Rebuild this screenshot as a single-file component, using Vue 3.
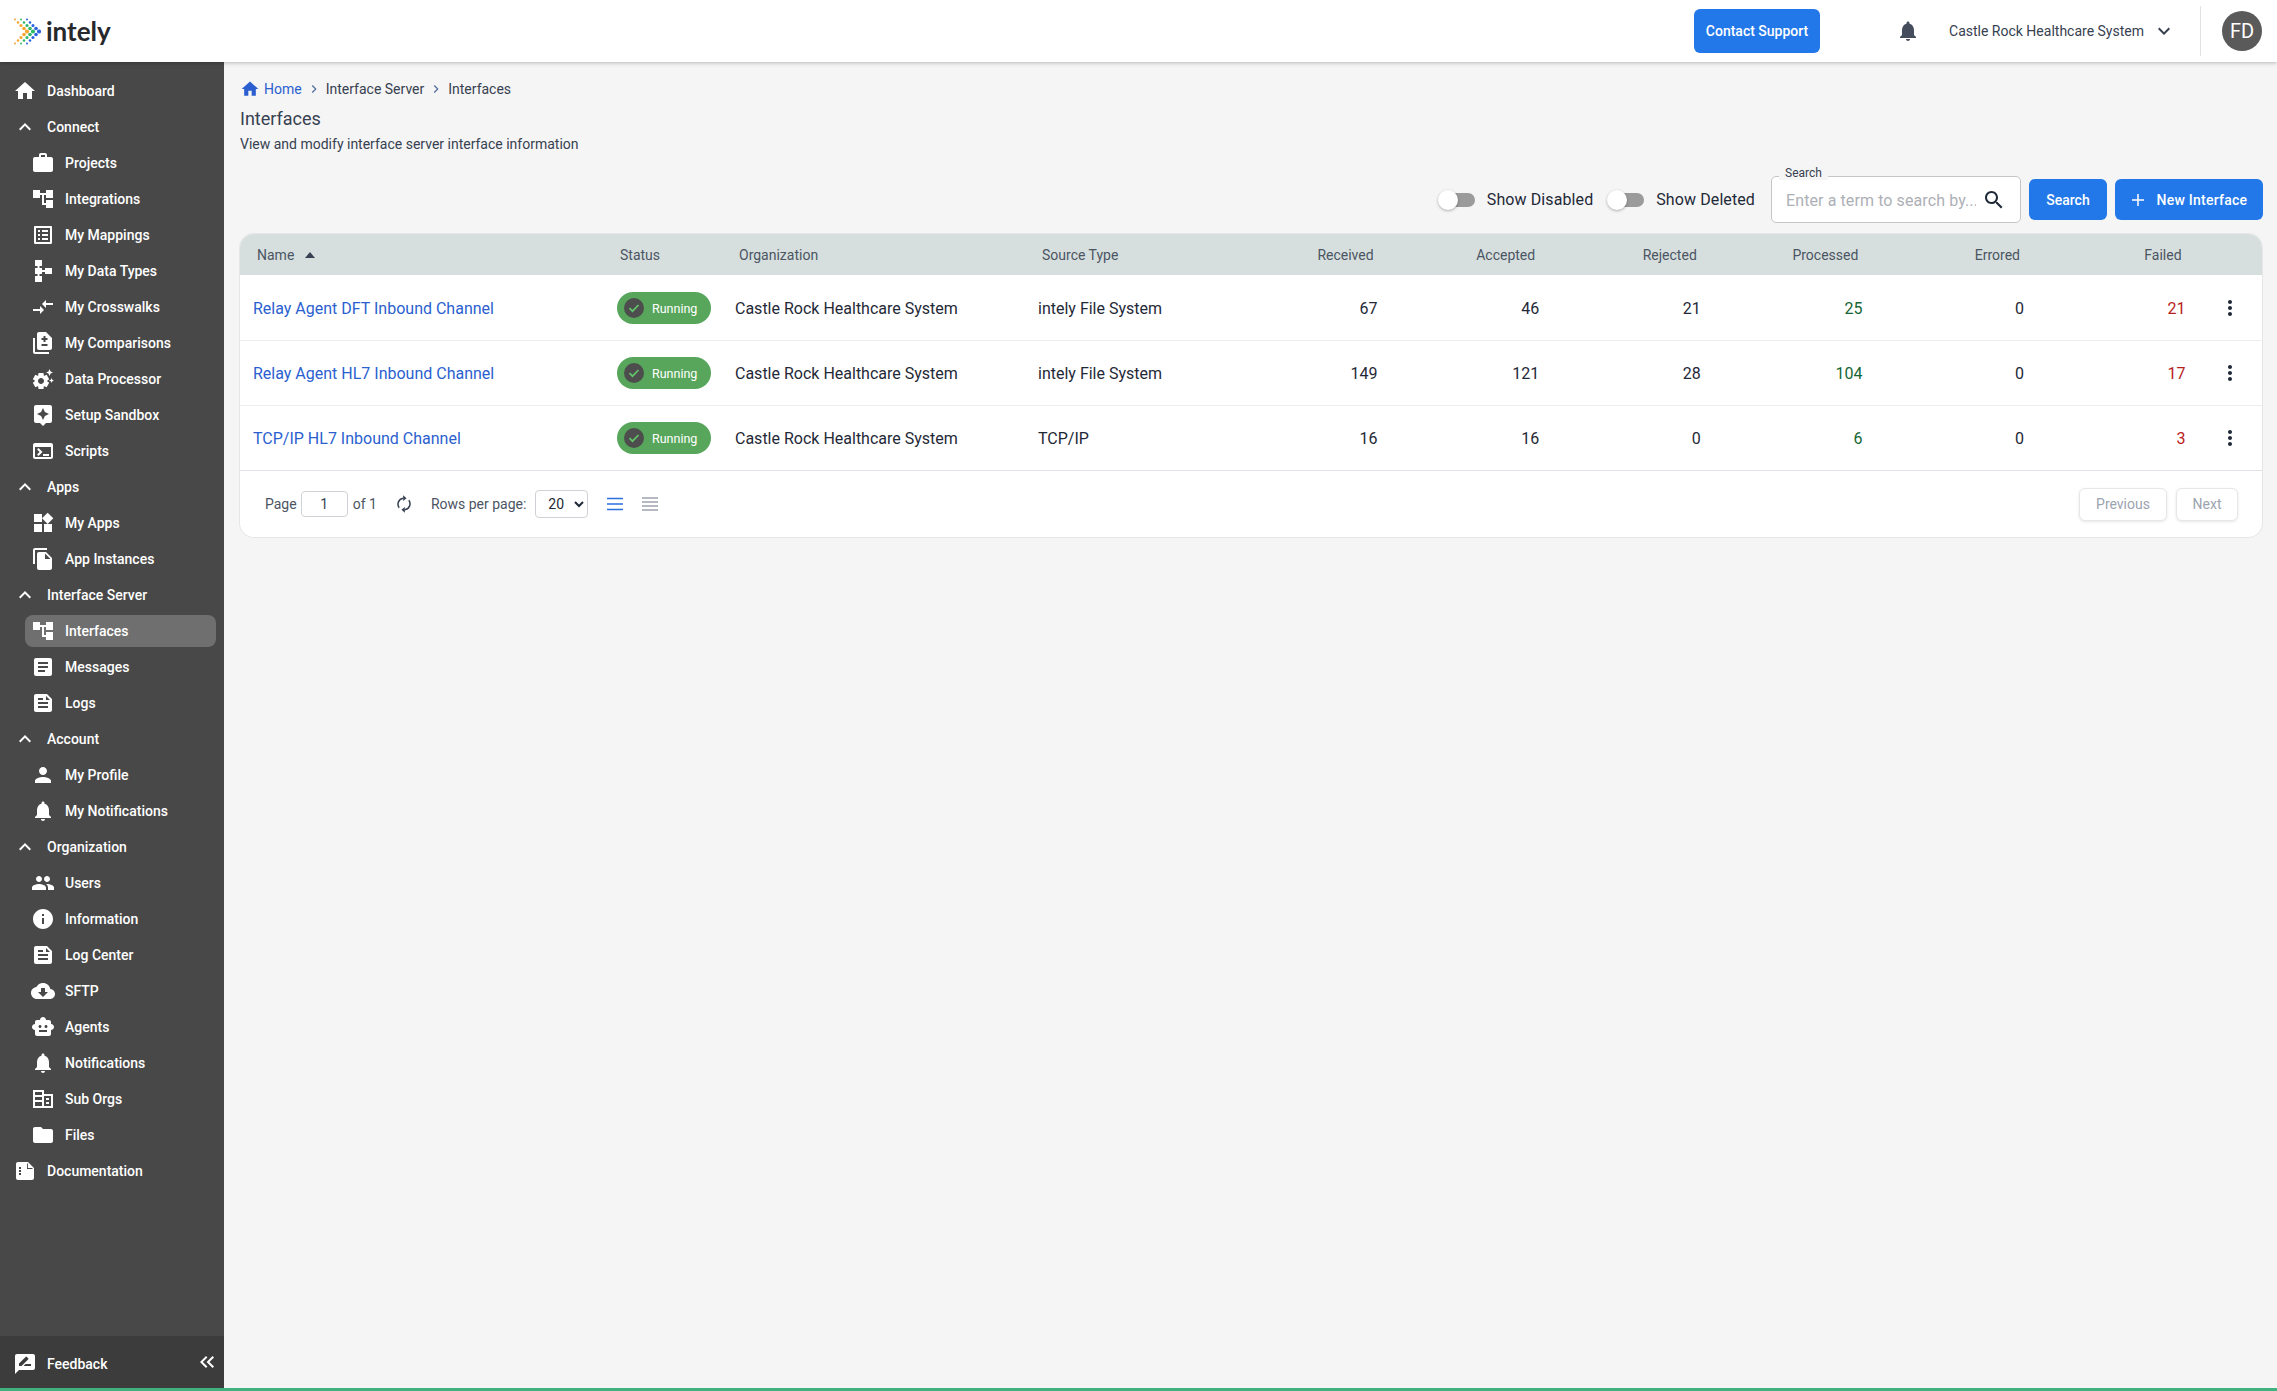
<template>
  <div class="page">
    <header class="topbar">
      <div class="logo">
        <svg class="logo-mark" viewBox="0 0 27 27">
          <circle v-for="(d, i) in logoDots" :key="i" :cx="d.x" :cy="d.y" :r="d.r" :fill="d.c" />
        </svg>
        <span class="logo-text">intely</span>
      </div>
      <button class="btn contact">Contact Support</button>
      <svg class="bell" viewBox="0 0 24 24"><path :d="icons.bell" /></svg>
      <span class="org-name">Castle Rock Healthcare System</span>
      <svg class="org-caret" viewBox="0 0 24 24"><path d="M7.41 8.59 12 13.17l4.59-4.58L18 10l-6 6-6-6z" /></svg>
      <div class="avatar-wrap"><div class="avatar">FD</div></div>
    </header>

    <div class="body">
      <aside class="sidebar">
        <nav class="nav">
          <a
            v-for="item in navItems"
            :key="item.label"
            class="nav-item"
            :class="{ child: item.child, active: item.active }"
          >
            <svg class="nav-icon" viewBox="0 0 24 24"><path fill-rule="evenodd" :d="icons[item.icon]" /></svg>
            <span>{{ item.label }}</span>
          </a>
        </nav>
        <div class="side-foot">
          <svg class="nav-icon" viewBox="0 0 24 24"><path :d="icons.feedback" /></svg>
          <span class="foot-label">Feedback</span>
          <svg class="collapse" viewBox="0 0 24 24"><path :d="icons.collapse" /></svg>
        </div>
      </aside>

      <main class="content">
        <div class="crumbs">
          <svg class="crumb-home" viewBox="0 0 24 24"><path :d="icons.home" /></svg>
          <a class="crumb-link">Home</a>
          <svg class="crumb-sep" viewBox="0 0 24 24"><path d="M9 6l6 6-6 6" /></svg>
          <span>Interface Server</span>
          <svg class="crumb-sep" viewBox="0 0 24 24"><path d="M9 6l6 6-6 6" /></svg>
          <span>Interfaces</span>
        </div>
        <h1 class="title">Interfaces</h1>
        <p class="subtitle">View and modify interface server interface information</p>

        <div class="toolbar">
          <label class="switch"><span class="track"><span class="knob"></span></span>Show Disabled</label>
          <label class="switch"><span class="track"><span class="knob"></span></span>Show Deleted</label>
          <div class="search-box">
            <span class="search-label">Search</span>
            <input class="search-input" placeholder="Enter a term to search by..." />
            <svg class="search-icon" viewBox="0 0 24 24"><path :d="icons.search" /></svg>
          </div>
          <button class="btn search-btn">Search</button>
          <button class="btn new-btn">
            <svg class="plus" viewBox="0 0 14 14"><path d="M7 1v12M1 7h12" /></svg>
            New Interface
          </button>
        </div>

        <section class="card">
          <div class="row head">
            <div class="th name-th">Name <svg class="sort" viewBox="0 0 10 6"><path d="M5 0l5 6H0z" /></svg></div>
            <div class="th status-th">Status</div>
            <div class="th left">Organization</div>
            <div class="th left">Source Type</div>
            <div v-for="c in numCols" :key="c" class="th num-th">{{ c }}</div>
            <div></div>
          </div>
          <div v-for="r in rows" :key="r.name" class="row item">
            <a class="name-link">{{ r.name }}</a>
            <div class="cell">
              <span class="pill">
                <svg class="pill-check" viewBox="0 0 20 20">
                  <circle cx="10" cy="10" r="10" fill="#4d4d4d" />
                  <path d="M5.5 10.2l3 3 6-6.2" fill="none" stroke="#62c46a" stroke-width="1.7" />
                </svg>
                Running
              </span>
            </div>
            <div class="cell">Castle Rock Healthcare System</div>
            <div class="cell">{{ r.source }}</div>
            <div class="num">{{ r.received }}</div>
            <div class="num">{{ r.accepted }}</div>
            <div class="num">{{ r.rejected }}</div>
            <div class="num green">{{ r.processed }}</div>
            <div class="num">{{ r.errored }}</div>
            <div class="num red">{{ r.failed }}</div>
            <div class="more">
              <svg viewBox="0 0 24 24"><path :d="icons.more" /></svg>
            </div>
          </div>
          <div class="pager">
            <span>Page</span>
            <input class="page-input" value="1" />
            <span class="of">of 1</span>
            <svg class="refresh" viewBox="0 0 24 24">
              <path class="refresh-arc" d="M6.2 16.5A7.2 7.2 0 0 1 11 5.1M17.8 7.5A7.2 7.2 0 0 1 13 18.9" />
              <path d="M11 1.5v7l4-3.5zM13 15.5v7l-4-3.5z" />
            </svg>
            <span class="rows-label">Rows per page:</span>
            <select class="rows-select">
              <option>20</option>
              <option>50</option>
            </select>
            <svg class="density blue" viewBox="0 0 16 14"><path d="M0 1.5h16M0 7h16M0 12.5h16" /></svg>
            <svg class="density gray" viewBox="0 0 16 14"><path d="M0 1h16M0 5h16M0 9h16M0 13h16" /></svg>
            <button class="page-btn prev">Previous</button>
            <button class="page-btn">Next</button>
          </div>
        </section>
      </main>
    </div>
    <div class="status-line"></div>
  </div>
</template>

<script setup>
const icons = {
  home: 'M10 20v-6h4v6h5v-8h3L12 3 2 12h3v8z',
  up: 'M12 8l-6 6 1.41 1.41L12 10.83l4.59 4.58L18 14z',
  work: 'M20 6h-4V4c0-1.11-.89-2-2-2h-4c-1.11 0-2 .89-2 2v2H4c-1.11 0-1.99.89-1.99 2L2 19c0 1.11.89 2 2 2h16c1.11 0 2-.89 2-2V8c0-1.11-.89-2-2-2zm-6 0h-4V4h4v2z',
  tree: 'M22 11V3h-7v3H9V3H2v8h7V8h2v10h4v3h7v-8h-7v3h-2V8h2v3z',
  listAlt: 'M19 5v14H5V5h14m1.1-2H3.9c-.5 0-.9.4-.9.9v16.2c0 .4.4.9.9.9h16.2c.4 0 .9-.5.9-.9V3.9c0-.5-.5-.9-.9-.9zM11 7h6v2h-6V7zm0 4h6v2h-6v-2zm0 4h6v2h-6zM7 7h2v2H7zm0 4h2v2H7zm0 4h2v2H7z',
  schema: 'M14 9v2h-3V9H8.5V7H11V1H4v6h2.5v2H4v6h2.5v2H4v6h7v-6H8.5v-2H11v-2h3v2h7V9H14z',
  compare: 'M9.01 14H2v2h7.01v3L13 15l-3.99-4v3zm5.98-1v-3H22V8h-7.01V5L11 9l3.99 4z',
  difference: 'M18 23H4c-1.1 0-2-.9-2-2V7h2v14h14v2zM15 1H8c-1.1 0-1.99.9-1.99 2L6 17c0 1.1.89 2 1.99 2H19c1.1 0 2-.9 2-2V7l-6-6zm1.5 14h-6v-2h6v2zm0-6h-2v2h-2V9h-2V7h2V5h2v2h2v2z',
  gearSpark: 'M17.41 6.59L15 5.5l2.41-1.09L18.5 2l1.09 2.41L22 5.5l-2.41 1.09L18.5 9l-1.09-2.41zM21.28 12.72L20.5 11l-.78 1.72L18 13.5l1.72.78L20.5 16l.78-1.72L23 13.5l-1.72-.78zM16.24 14.37l1.94 1.47-2.5 4.33-2.24-.94c-.2.13-.42.26-.64.37L12.5 22h-5l-.3-2.41c-.22-.11-.43-.23-.64-.37l-2.24.94-2.5-4.33 1.94-1.47c-.01-.12-.03-.25-.03-.37s.01-.25.02-.37l-1.94-1.47 2.5-4.33 2.24.94c.2-.13.42-.26.64-.37L7.5 6h5l.3 2.41c.22.11.43.23.64.37l2.24-.94 2.5 4.33-1.94 1.47c.01.12.02.24.02.37s-.01.25-.02.37zM13 14c0-1.66-1.34-3-3-3s-3 1.34-3 3 1.34 3 3 3 3-1.34 3-3z',
  assistant: 'M19 2H5c-1.1 0-2 .9-2 2v14c0 1.1.9 2 2 2h4l3 3 3-3h4c1.1 0 2-.9 2-2V4c0-1.1-.9-2-2-2zm-5.12 10.88L12 17l-1.88-4.12L6 11l4.12-1.88L12 5l1.88 4.12L18 11l-4.12 1.88z',
  terminal: 'M20 4H4c-1.1 0-2 .9-2 2v12c0 1.1.9 2 2 2h16c1.1 0 2-.9 2-2V6c0-1.1-.9-2-2-2zm0 14H4V8h16v10zm-2-1h-6v-2h6v2zM7.5 17l-1.41-1.41L8.67 13l-2.59-2.59L7.5 9l4 4-4 4z',
  widgets: 'M13 13v8h8v-8h-8zM3 21h8v-8H3v8zM3 3v8h8V3H3zm13.66-1.31L11 7.34 16.66 13l5.66-5.66-5.66-5.65z',
  fileCopy: 'M16 1H4c-1.1 0-2 .9-2 2v14h2V3h12V1zm-1 4l6 6v10c0 1.1-.9 2-2 2H7.99C6.89 23 6 22.1 6 21l.01-14c0-1.1.89-2 1.99-2h7zm-1 7h5.5L14 6.5V12z',
  article: 'M19 3H5c-1.1 0-2 .9-2 2v14c0 1.1.9 2 2 2h14c1.1 0 2-.9 2-2V5c0-1.1-.9-2-2-2zm-5 14H7v-2h7v2zm3-4H7v-2h10v2zm0-4H7V7h10v2z',
  feed: 'M16 3H5c-1.1 0-1.99.9-1.99 2L3 19c0 1.1.89 2 1.99 2H19c1.1 0 2-.9 2-2V8l-5-5zM7 7h5v2H7V7zm10 10H7v-2h10v2zm0-4H7v-2h10v2zm-2-4V5l4 4h-4z',
  person: 'M12 12c2.21 0 4-1.79 4-4s-1.79-4-4-4-4 1.79-4 4 1.79 4 4 4zm0 2c-2.67 0-8 1.34-8 4v2h16v-2c0-2.66-5.33-4-8-4z',
  bell: 'M12 22c1.1 0 2-.9 2-2h-4c0 1.1.89 2 2 2zm6-6v-5c0-3.07-1.64-5.64-4.5-6.32V4c0-.83-.67-1.5-1.5-1.5s-1.5.67-1.5 1.5v.68C7.63 5.36 6 7.92 6 11v5l-2 2v1h16v-1l-2-2z',
  people: 'M16 11c1.66 0 2.99-1.34 2.99-3S17.66 5 16 5c-1.66 0-3 1.34-3 3s1.34 3 3 3zm-8 0c1.66 0 2.99-1.34 2.99-3S9.66 5 8 5C6.34 5 5 6.34 5 8s1.34 3 3 3zm0 2c-2.33 0-7 1.17-7 3.5V19h14v-2.5c0-2.33-4.67-3.5-7-3.5zm8 0c-.29 0-.62.02-.97.05 1.16.84 1.97 1.97 1.97 3.45V19h6v-2.5c0-2.33-4.67-3.5-7-3.5z',
  info: 'M12 2C6.48 2 2 6.48 2 12s4.48 10 10 10 10-4.48 10-10S17.52 2 12 2zm1 15h-2v-6h2v6zm0-8h-2V7h2v2z',
  cloud: 'M19.35 10.04C18.67 6.59 15.64 4 12 4 9.11 4 6.6 5.64 5.35 8.04 2.34 8.36 0 10.91 0 14c0 3.31 2.69 6 6 6h13c2.76 0 5-2.24 5-5 0-2.64-2.05-4.78-4.65-4.96zM17 13l-5 5-5-5h3V9h4v4h3z',
  robot: 'M20 9V7c0-1.1-.9-2-2-2h-3c0-1.66-1.34-3-3-3S9 3.34 9 5H6c-1.1 0-2 .9-2 2v2c-1.66 0-3 1.34-3 3s1.34 3 3 3v4c0 1.1.9 2 2 2h12c1.1 0 2-.9 2-2v-4c1.66 0 3-1.34 3-3s-1.34-3-3-3zM7.5 11.5C7.5 10.67 8.17 10 9 10s1.5.67 1.5 1.5S9.83 13 9 13s-1.5-.67-1.5-1.5zM16 17H8v-2h8v2zm-1-4c-.83 0-1.5-.67-1.5-1.5S14.17 10 15 10s1.5.67 1.5 1.5S15.83 13 15 13z',
  building: 'M2 3h11v4h9v14H2zM4 5v3h7V5zM4 10v3h7v-3zM4 15v4h7v-4zM13 9v10h7V9zM15 11h3v2h-3zM15 15h3v2h-3z',
  folder: 'M10 4H4c-1.1 0-1.99.9-1.99 2L2 18c0 1.1.9 2 2 2h16c1.1 0 2-.9 2-2V8c0-1.1-.9-2-2-2h-8l-2-2z',
  doc: 'M5 3h10l6 6v10c0 1.1-.9 2-2 2H5c-1.1 0-2-.9-2-2V5c0-1.1.9-2 2-2zM14 4v6h6l-.9-.9h-4.2V4.9zM6 8h2v2H6zM6 11h2v2H6zM6 14h2v2H6z',
  feedback: 'M20 2H4c-1.1 0-1.99.9-1.99 2L2 22l4-4h14c1.1 0 2-.9 2-2V4c0-1.1-.9-2-2-2zM6 14v-2.47l6.88-6.88c.2-.2.51-.2.71 0l1.77 1.77c.2.2.2.51 0 .71L8.47 14H6zm12 0h-7.5l2-2H18v2z',
  collapse: 'M17.59 18L19 16.59 14.42 12 19 7.41 17.59 6l-6 6zM11 18l1.41-1.41L7.83 12l4.58-4.59L11 6l-6 6z',
  search: 'M15.5 14h-.79l-.28-.27C15.41 12.59 16 11.11 16 9.5 16 5.91 13.09 3 9.5 3S3 5.91 3 9.5 5.91 16 9.5 16c1.61 0 3.09-.59 4.23-1.57l.27.28v.79l5 4.99L20.49 19l-4.99-5zm-6 0C7.01 14 5 11.99 5 9.5S7.01 5 9.5 5 14 7.01 14 9.5 11.99 14 9.5 14z',
  more: 'M12 8c1.1 0 2-.9 2-2s-.9-2-2-2-2 .9-2 2 .9 2 2 2zm0 2c-1.1 0-2 .9-2 2s.9 2 2 2 2-.9 2-2-.9-2-2-2zm0 6c-1.1 0-2 .9-2 2s.9 2 2 2 2-.9 2-2-.9-2-2-2z'
}

const navItems = [
  { label: 'Dashboard', icon: 'home' },
  { label: 'Connect', icon: 'up' },
  { label: 'Projects', icon: 'work', child: true },
  { label: 'Integrations', icon: 'tree', child: true },
  { label: 'My Mappings', icon: 'listAlt', child: true },
  { label: 'My Data Types', icon: 'schema', child: true },
  { label: 'My Crosswalks', icon: 'compare', child: true },
  { label: 'My Comparisons', icon: 'difference', child: true },
  { label: 'Data Processor', icon: 'gearSpark', child: true },
  { label: 'Setup Sandbox', icon: 'assistant', child: true },
  { label: 'Scripts', icon: 'terminal', child: true },
  { label: 'Apps', icon: 'up' },
  { label: 'My Apps', icon: 'widgets', child: true },
  { label: 'App Instances', icon: 'fileCopy', child: true },
  { label: 'Interface Server', icon: 'up' },
  { label: 'Interfaces', icon: 'tree', child: true, active: true },
  { label: 'Messages', icon: 'article', child: true },
  { label: 'Logs', icon: 'feed', child: true },
  { label: 'Account', icon: 'up' },
  { label: 'My Profile', icon: 'person', child: true },
  { label: 'My Notifications', icon: 'bell', child: true },
  { label: 'Organization', icon: 'up' },
  { label: 'Users', icon: 'people', child: true },
  { label: 'Information', icon: 'info', child: true },
  { label: 'Log Center', icon: 'feed', child: true },
  { label: 'SFTP', icon: 'cloud', child: true },
  { label: 'Agents', icon: 'robot', child: true },
  { label: 'Notifications', icon: 'bell', child: true },
  { label: 'Sub Orgs', icon: 'building', child: true },
  { label: 'Files', icon: 'folder', child: true },
  { label: 'Documentation', icon: 'doc' }
]

const numCols = ['Received', 'Accepted', 'Rejected', 'Processed', 'Errored', 'Failed']

const rows = [
  { name: 'Relay Agent DFT Inbound Channel', source: 'intely File System', received: 67, accepted: 46, rejected: 21, processed: 25, errored: 0, failed: 21 },
  { name: 'Relay Agent HL7 Inbound Channel', source: 'intely File System', received: 149, accepted: 121, rejected: 28, processed: 104, errored: 0, failed: 17 },
  { name: 'TCP/IP HL7 Inbound Channel', source: 'TCP/IP', received: 16, accepted: 16, rejected: 0, processed: 6, errored: 0, failed: 3 }
]

// three chevrons of dots, biggest at the tip
const logoDots = []
const logoColors = ['#f7a531', '#2fb868', '#2a62e0']
logoColors.forEach((c, n) => {
  for (let i = -4; i <= 4; i++) {
    const step = 4 - Math.abs(i)
    logoDots.push({ x: 1 + n * 6 + step * 3, y: 13.5 + i * 3, r: 1 + step * 0.27, c })
  }
})
</script>

<style>
html, body {
  margin: 0;
  background: #f5f5f5;
}
</style>

<style scoped>
.page {
  height: 1391px;
  display: flex;
  flex-direction: column;
  overflow: hidden;
  font-family: Roboto, "Liberation Sans", sans-serif;
  color: #1f2937;
  background: #f5f5f5;
}
.topbar {
  height: 62px;
  flex: none;
  display: flex;
  align-items: center;
  background: #fff;
  box-shadow: 0 1px 4px rgba(0, 0, 0, 0.25);
  position: relative;
  z-index: 2;
}
.logo {
  display: flex;
  align-items: center;
  margin-left: 14px;
  margin-right: auto;
}
.logo-mark {
  width: 27px;
  height: 27px;
}
.logo-text {
  font-family: Lato, sans-serif;
  font-size: 26px;
  font-weight: 700;
  color: #26282c;
  margin-left: 5px;
  line-height: 1;
}
.btn {
  border: 0;
  border-radius: 6px;
  background: #2278e9;
  color: #fff;
  font-family: inherit;
  font-size: 14px;
  font-weight: 500;
}
.contact {
  width: 126px;
  height: 44px;
}
.bell {
  width: 24px;
  height: 24px;
  fill: #454c5c;
  margin-left: 76px;
}
.org-name {
  margin-left: 29px;
  font-size: 14px;
  color: #374151;
}
.org-caret {
  width: 24px;
  height: 24px;
  fill: #374151;
  margin-left: 8px;
}
.avatar-wrap {
  margin-left: 24px;
  height: 50px;
  width: 77px;
  border-left: 1px solid #e2e2e2;
  display: flex;
  align-items: center;
  padding-left: 21px;
  box-sizing: border-box;
}
.avatar {
  width: 40px;
  height: 40px;
  border-radius: 50%;
  background: #5a5a5a;
  color: #fff;
  font-size: 20px;
  display: flex;
  align-items: center;
  justify-content: center;
}
.body {
  flex: 1;
  display: flex;
  min-height: 0;
}
.sidebar {
  width: 224px;
  flex: none;
  background: #484848;
  display: flex;
  flex-direction: column;
  color: #fff;
}
.nav {
  flex: 1;
  padding-top: 11px;
}
.nav-item {
  height: 36px;
  display: flex;
  align-items: center;
  padding-left: 13px;
  font-size: 14px;
  font-weight: 500;
  box-sizing: border-box;
  position: relative;
}
.nav-item.child {
  padding-left: 31px;
}
.nav-item.active::before {
  content: "";
  position: absolute;
  left: 25px;
  right: 8px;
  top: 2px;
  bottom: 2px;
  border-radius: 8px;
  background: #6f6f6f;
}
.nav-item > * {
  position: relative;
}
.nav-icon {
  width: 24px;
  height: 24px;
  fill: #fff;
  flex: none;
  margin-right: 10px;
}
.side-foot {
  height: 52px;
  flex: none;
  background: #3c3c3c;
  display: flex;
  align-items: center;
  padding: 4px 5px 0 13px;
  box-sizing: border-box;
  font-size: 14px;
  font-weight: 500;
}
.foot-label {
  margin-right: auto;
}
.collapse {
  width: 24px;
  height: 24px;
  fill: #fff;
  margin-top: -4px;
}
.content {
  flex: 1;
  min-width: 0;
  padding: 17px 15px 0 16px;
}
.crumbs {
  display: flex;
  align-items: center;
  height: 20px;
  font-size: 14px;
  color: #374151;
}
.crumb-home {
  width: 20px;
  height: 20px;
  fill: #2b5fd0;
  margin-right: 4px;
}
.crumb-link {
  color: #2b5fd0;
}
.crumb-sep {
  width: 14px;
  height: 14px;
  margin: 0 5px;
  fill: none;
  stroke: #4b6a9b;
  stroke-width: 2;
}
.title {
  margin: 7px 0 0;
  font-size: 18px;
  line-height: 26px;
  font-weight: 400;
  color: #374151;
}
.subtitle {
  margin: 2px 0 0;
  font-size: 14px;
  line-height: 20px;
  color: #374151;
}
.toolbar {
  margin-top: 22px;
  display: flex;
  align-items: center;
  justify-content: flex-end;
  margin-right: -1px;
}
.switch {
  display: flex;
  align-items: center;
  font-size: 16px;
  letter-spacing: 0.1px;
  margin-right: 14px;
  color: #1f2937;
}
.switch + .switch {
  margin-right: 16px;
}
.track {
  width: 30px;
  height: 14px;
  border-radius: 7px;
  background: #9b9b9b;
  margin-left: 7px;
  margin-right: 12px;
  position: relative;
}
.knob {
  position: absolute;
  left: -7px;
  top: -3px;
  width: 20px;
  height: 20px;
  border-radius: 50%;
  background: #fff;
  box-shadow: 0 1px 3px rgba(0, 0, 0, 0.3);
}
.search-box {
  width: 250px;
  height: 47px;
  box-sizing: border-box;
  border: 1px solid #c6c6c6;
  border-radius: 5px;
  background: #fff;
  display: flex;
  align-items: center;
  padding: 0 14px;
  position: relative;
}
.search-label {
  position: absolute;
  left: 7px;
  top: -11px;
  background: #f5f5f5;
  padding: 0 6px;
  font-size: 12px;
  line-height: 14px;
  color: #374151;
}
.search-input {
  flex: 1;
  min-width: 0;
  border: 0;
  outline: 0;
  padding: 1px 0 0;
  font-family: inherit;
  font-size: 16px;
  letter-spacing: 0.1px;
}
.search-input::placeholder {
  color: #adb0b6;
}
.search-icon {
  width: 24px;
  height: 24px;
  fill: #1f2937;
  flex: none;
  margin-left: 6px;
}
.search-btn {
  width: 78px;
  height: 41px;
  margin-left: 8px;
}
.new-btn {
  width: 148px;
  height: 41px;
  margin-left: 8px;
  letter-spacing: 0.25px;
}
.plus {
  width: 14px;
  height: 14px;
  fill: none;
  stroke: #fff;
  stroke-width: 1.5;
  vertical-align: -2px;
  margin-right: 8px;
}
.card {
  margin-top: 11px;
  background: #fff;
  border-radius: 14px;
  overflow: hidden;
  box-shadow: 0 0 0 1px #e6e6e6;
}
.row {
  display: grid;
  grid-template-columns: 373px 118px 303px 186px repeat(6, 161.6px) 1fr;
  align-items: center;
}
.head {
  height: 41px;
  background: #d7dfde;
}
.th {
  font-size: 14px;
  color: #4b5563;
}
.name-th {
  padding-left: 17px;
  display: flex;
  align-items: center;
}
.sort {
  width: 10px;
  height: 6px;
  fill: #374151;
  margin-left: 11px;
}
.status-th {
  padding-left: 7px;
}
.left {
  padding-left: 8px;
}
.num-th {
  text-align: right;
  padding-right: 8px;
}
.item {
  height: 65px;
  border-top: 1px solid #eceef0;
  box-sizing: border-box;
  font-size: 16px;
}
.head + .item {
  border-top-color: transparent;
}
.name-link {
  padding-left: 13px;
  color: #2b5fd0;
}
.cell {
  padding-left: 4px;
  color: #1f2937;
}
.pill {
  width: 94px;
  height: 32px;
  border-radius: 16px;
  background: #58a65c;
  color: #fff;
  font-size: 12.5px;
  display: flex;
  align-items: center;
  box-sizing: border-box;
  padding: 1px 0 0 7px;
}
.pill-check {
  width: 20px;
  height: 20px;
  margin: -1px 8px 0 0;
}
.num {
  text-align: right;
  padding-right: 4px;
}
.green {
  color: #166534;
}
.red {
  color: #b91c1c;
}
.more {
  display: flex;
  padding-left: 28px;
}
.more svg {
  width: 24px;
  height: 24px;
  fill: #1f2937;
}
.pager {
  height: 67px;
  border-top: 1px solid #e2e3e8;
  box-sizing: border-box;
  display: flex;
  align-items: center;
  padding: 0 24px 0 25px;
  font-size: 14px;
  color: #4b5563;
}
.page-input {
  width: 47px;
  height: 26px;
  box-sizing: border-box;
  margin-left: 4px;
  border: 1px solid #cfd2d6;
  border-radius: 4px;
  text-align: center;
  font-family: inherit;
  font-size: 14px;
  color: #374151;
  padding: 0;
  outline: 0;
}
.of {
  margin-left: 5px;
}
.refresh {
  width: 20px;
  height: 20px;
  fill: #374151;
  margin-left: 17px;
}
.refresh-arc {
  fill: none;
  stroke: #374151;
  stroke-width: 1.8;
}
.rows-label {
  margin-left: 17px;
}
.rows-select {
  width: 53px;
  height: 28px;
  margin-left: 9px;
  border: 1px solid #cfd2d6;
  border-radius: 4px;
  background: #fff;
  font-family: inherit;
  font-size: 14px;
  color: #1f2937;
  padding-left: 8px;
}
.density {
  width: 16px;
  height: 14px;
  fill: none;
  stroke-width: 1.5;
}
.density.blue {
  stroke: #2b6fe0;
  margin-left: 19px;
}
.density.gray {
  stroke: #9ca3af;
  margin-left: 19px;
  margin-right: auto;
}
.page-btn {
  height: 33px;
  width: 62px;
  border: 1px solid #e7e7e7;
  border-radius: 6px;
  background: #fff;
  box-shadow: 0 1px 3px rgba(0, 0, 0, 0.1);
  font-family: inherit;
  font-size: 14px;
  color: #9ca3af;
}
.prev {
  width: 88px;
  margin-right: 9px;
}
.status-line {
  height: 3px;
  flex: none;
  background: #3fb27f;
}
</style>
